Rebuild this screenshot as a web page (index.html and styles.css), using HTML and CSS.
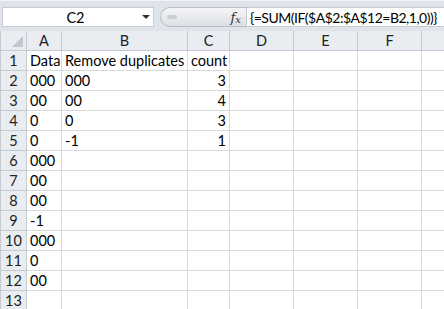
FILE: index.html
```html
<!DOCTYPE html>
<html>
<head>
    <title>Sheet</title>
    <link rel="stylesheet" href="styles.css">
</head>
<body>
    <div class="toolbar">
        <div class="namebox">
            <span class="cellref">C2</span>
            <span class="arrow"></span>
        </div>
        <div class="pill">
            <span class="grip"></span>
            <span class="fx">f<sub>x</sub></span>
        </div>
        <div class="formula">{=SUM(IF($A$2:$A$12=B2,1,0))}</div>
    </div>

    <table class="grid">
        <colgroup>
            <col class="c-head"><col class="c-a"><col class="c-b"><col class="c-c">
            <col class="c-d"><col class="c-e"><col class="c-f"><col class="c-g">
        </colgroup>
        <tr class="colhead">
            <th class="corner"><span class="tri"></span></th>
            <th>A</th><th>B</th><th>C</th><th>D</th><th>E</th><th>F</th><th></th>
        </tr>
        <tr><th>1</th><td>Data</td><td>Remove duplicates</td><td>count</td><td></td><td></td><td></td><td></td></tr>
        <tr><th>2</th><td>000</td><td>000</td><td class="num">3</td><td></td><td></td><td></td><td></td></tr>
        <tr><th>3</th><td>00</td><td>00</td><td class="num">4</td><td></td><td></td><td></td><td></td></tr>
        <tr><th>4</th><td>0</td><td>0</td><td class="num">3</td><td></td><td></td><td></td><td></td></tr>
        <tr><th>5</th><td>0</td><td>-1</td><td class="num">1</td><td></td><td></td><td></td><td></td></tr>
        <tr><th>6</th><td>000</td><td></td><td></td><td></td><td></td><td></td><td></td></tr>
        <tr><th>7</th><td>00</td><td></td><td></td><td></td><td></td><td></td><td></td></tr>
        <tr><th>8</th><td>00</td><td></td><td></td><td></td><td></td><td></td><td></td></tr>
        <tr><th>9</th><td>-1</td><td></td><td></td><td></td><td></td><td></td><td></td></tr>
        <tr><th>10</th><td>000</td><td></td><td></td><td></td><td></td><td></td><td></td></tr>
        <tr><th>11</th><td>0</td><td></td><td></td><td></td><td></td><td></td><td></td></tr>
        <tr><th>12</th><td>00</td><td></td><td></td><td></td><td></td><td></td><td></td></tr>
        <tr><th>13</th><td></td><td></td><td></td><td></td><td></td><td></td><td></td></tr>
    </table>
</body>
</html>
```

FILE: styles.css
```css
body {
    margin: 0;
    font-family: Lato, "Open Sans", sans-serif;
    font-size: 14.5px;
    color: #000;
    background: #fff;
    overflow: hidden;
}

.toolbar {
    display: flex;
    height: 31px;
    box-sizing: border-box;
    padding: 6px 0 4px 2px;
    background: #dfe4eb;
    border-top: 1px solid #f1f3f6;
}

.namebox {
    flex: 0 0 152px;
    display: flex;
    align-items: center;
    background: #fff;
    border: 1px solid #c6ccd4;
    box-sizing: border-box;
}

.cellref {
    flex: 1;
    text-align: center;
    padding-left: 6px;
}

.arrow {
    width: 0;
    height: 0;
    border-left: 4px solid transparent;
    border-right: 4px solid transparent;
    border-top: 4px solid #333;
    margin-right: 3px;
}

.pill {
    flex: 0 0 86px;
    margin-left: 6px;
    display: flex;
    align-items: center;
    justify-content: space-between;
    background: linear-gradient(#f4f5f7, #dcdfe3);
    border: 1px solid #b9bfc7;
    border-right: none;
    border-radius: 11px 0 0 11px;
    box-sizing: border-box;
}

.grip {
    width: 10px;
    height: 4px;
    margin-left: 6px;
    border-radius: 2px;
    background: #c9cdd3;
}

.fx {
    font-family: "DejaVu Serif", serif;
    font-style: italic;
    font-size: 13px;
    color: #333;
    padding-right: 5px;
}

.fx sub {
    font-size: 10px;
    vertical-align: -1px;
}

.formula {
    flex: 1;
    min-width: 0;
    overflow: hidden;
    background: #fff;
    border: 1px solid #c6ccd4;
    border-right: none;
    box-sizing: border-box;
    padding-left: 3px;
    font-size: 14px;
    letter-spacing: -0.5px;
    line-height: 19px;
    white-space: nowrap;
}

.grid {
    border-collapse: collapse;
    table-layout: fixed;
    width: 445px;
}

.c-head { width: 26px; }
.c-a { width: 35px; }
.c-b { width: 126px; }
.c-c { width: 42px; }
.c-d { width: 64px; }
.c-e { width: 64px; }
.c-f { width: 64px; }
.c-g { width: 24px; }

.grid th,
.grid td {
    height: 19px;
    padding: 0 3px;
    border: 1px solid #d9d9d9;
    white-space: nowrap;
    overflow: hidden;
}

.grid th {
    background: #e9edf2;
    border-color: #c5cad1;
    font-weight: normal;
    color: #222;
    text-align: center;
    padding: 0;
}

.colhead th {
    border-top: none;
}

.corner {
    position: relative;
}

.tri {
    position: absolute;
    right: 3px;
    bottom: 3px;
    width: 0;
    height: 0;
    border-left: 11px solid transparent;
    border-bottom: 11px solid #c2c7ce;
}

.grid td.num {
    text-align: right;
}
```
